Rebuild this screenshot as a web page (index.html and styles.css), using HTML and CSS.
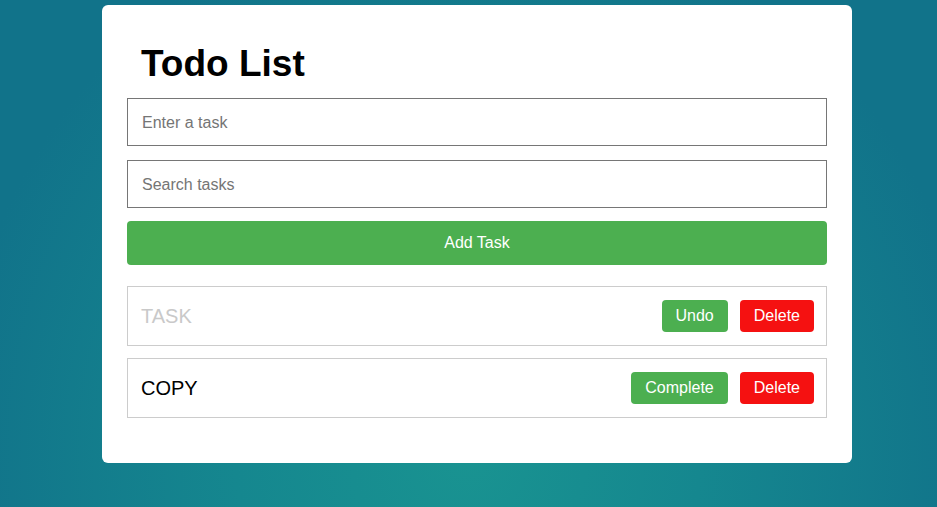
FILE: index.html
```html
<!DOCTYPE html>
<html lang="en">
<head>
<meta charset="utf-8">
<title>Todo List</title>
<link rel="stylesheet" href="styles.css">
</head>
<body>
<div class="card">
  <h1 class="title">Todo List</h1>
  <input class="field field-task" type="text" placeholder="Enter a task">
  <input class="field field-search" type="text" placeholder="Search tasks">
  <button class="add-btn">Add Task</button>
  <ul class="list">
    <li class="item done">
      <span class="item-text">TASK</span>
      <div class="actions">
        <button class="btn btn-green">Undo</button>
        <button class="btn btn-red">Delete</button>
      </div>
    </li>
    <li class="item">
      <span class="item-text">COPY</span>
      <div class="actions">
        <button class="btn btn-green">Complete</button>
        <button class="btn btn-red">Delete</button>
      </div>
    </li>
  </ul>
</div>
</body>
</html>
```
FILE: styles.css
```css
* { box-sizing: border-box; }
html, body { height: 100%; }
body {
  margin: 0;
  padding: 5px 0 0 102px;
  font-family: "Liberation Sans", Arial, sans-serif;
  background: radial-gradient(ellipse 55% 110% at 50% 90%, #199391 0%, #15878f 45%, #11738a 100%);
  overflow: hidden;
}
.card {
  width: 750px;
  background: #fff;
  border-radius: 6px;
  padding: 30px 25px 33px;
}
.title {
  margin: 8px 0 14px;
  padding-left: 14px;
  font-size: 37px;
  line-height: 41px;
  font-weight: bold;
  color: #000;
}
.field {
  display: block;
  width: 100%;
  height: 48px;
  padding: 1px 14px 0;
  border: 1px solid #767676;
  border-radius: 0;
  font-family: "Liberation Sans", Arial, sans-serif;
  font-size: 16px;
  color: #000;
  outline: none;
}
.field::placeholder { color: #757575; }
.field-task { margin-bottom: 14px; }
.field-search { margin-bottom: 13px; }
.add-btn {
  display: block;
  width: 100%;
  height: 44px;
  border: none;
  border-radius: 4px;
  background: #4caf50;
  color: #fff;
  font-family: "Liberation Sans", Arial, sans-serif;
  font-size: 16px;
  margin-bottom: 21px;
}
.list {
  list-style: none;
  margin: 0;
  padding: 0;
}
.item {
  display: flex;
  align-items: center;
  justify-content: space-between;
  height: 60px;
  padding: 0 12px 0 13px;
  border: 1px solid #cccccc;
  margin-bottom: 12px;
}
.item-text {
  font-size: 20px;
  color: #000;
}
.item.done .item-text { color: #c9c9c9; }
.actions {
  display: flex;
  gap: 12px;
}
.btn {
  height: 32px;
  padding: 0 14px;
  border: none;
  border-radius: 4px;
  color: #fff;
  font-family: "Liberation Sans", Arial, sans-serif;
  font-size: 16px;
}
.btn-green { background: #4caf50; }
.btn-red { background: #f51111; }
```
